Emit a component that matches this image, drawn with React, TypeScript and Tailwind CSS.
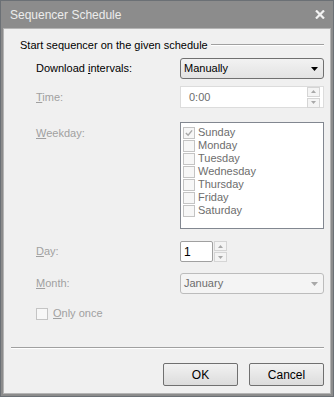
import React from "react";

const days = ["Sunday", "Monday", "Tuesday", "Wednesday", "Thursday", "Friday", "Saturday"];

// Small gray spin buttons used by Time and Day fields
function Spin() {
  return (
    <div className="flex flex-col gap-[1px]">
      <div className="w-[13px] h-[10px] border border-[#d5d5d5] bg-[#f4f4f4] flex items-center justify-center">
        <svg width="5" height="3" viewBox="0 0 5 3">
          <path d="M0 3 L2.5 0 L5 3 Z" fill="#a8a8a8" />
        </svg>
      </div>
      <div className="w-[13px] h-[10px] border border-[#d5d5d5] bg-[#f4f4f4] flex items-center justify-center">
        <svg width="5" height="3" viewBox="0 0 5 3">
          <path d="M0 0 L2.5 3 L5 0 Z" fill="#a8a8a8" />
        </svg>
      </div>
    </div>
  );
}

function CheckBox({ checked }: { checked?: boolean }) {
  return (
    <div className="w-[12px] h-[12px] border border-[#c4c4c4] bg-[#f7f7f7] flex items-center justify-center shrink-0">
      {checked && (
        <svg width="8" height="8" viewBox="0 0 9 9">
          <path d="M1 4.5 L3.5 7 L8 1.5" stroke="#a8a8a8" strokeWidth="1.6" fill="none" />
        </svg>
      )}
    </div>
  );
}

export default function App() {
  return (
    <div
      className="w-[334px] h-[397px] bg-[#8c8c8c] border border-[#6b7075] flex flex-col text-[11px] text-black"
      style={{ fontFamily: '"Liberation Sans", Arial, sans-serif' }}
    >
      {/* Title bar */}
      <div className="h-[27px] flex items-center justify-between pl-[9px] pr-[6px]">
        <span className="text-[12px] text-[#ececec] pt-[1px]">Sequencer Schedule</span>
        <svg width="10" height="9" viewBox="0 0 10 9" className="mr-[2px]">
          <path d="M1 0.5 L9 8.5 M9 0.5 L1 8.5" stroke="#f2f2f2" strokeWidth="2.2" />
        </svg>
      </div>

      {/* Client area */}
      <div className="flex-1 mx-[2px] mb-[2px] border border-[#b4b4b4] bg-[#f0f0f0] flex flex-col pl-[5px] pr-[6px]">
        {/* Group header */}
        <div className="flex items-center mt-[9px] h-[14px] pl-[11px]">
          <span className="whitespace-nowrap">Start sequencer on the given schedule</span>
          <div className="flex-1 ml-[3px] border-t border-[#a0a0a0] border-b-white border-b" />
        </div>

        <div className="pl-[27px] flex flex-col">
          {/* Download intervals */}
          <div className="flex items-center mt-[6px] h-[21px]">
            <span className="w-[144px]">
              Download <u>i</u>ntervals:
            </span>
            <div className="flex-1 h-[21px] border border-[#707070] rounded-[3px] bg-gradient-to-b from-[#f2f2f2] to-[#e3e3e3] flex items-center justify-between pl-[3px] pr-[5px]">
              <span>Manually</span>
              <svg width="7" height="4" viewBox="0 0 7 4">
                <path d="M0 0 L7 0 L3.5 4 Z" fill="#000" />
              </svg>
            </div>
          </div>

          {/* Time */}
          <div className="flex items-center mt-[7px] h-[22px]">
            <span className="w-[144px] text-[#a0a0a0]">
              <u>T</u>ime:
            </span>
            <div className="flex-1 h-[22px] border border-[#dcdcdc] bg-white flex items-center justify-between pl-[8px] pr-[3px]">
              <span className="text-[#6d6d6d]">0:00</span>
              <Spin />
            </div>
          </div>

          {/* Weekday */}
          <div className="flex items-start mt-[14px]">
            <span className="w-[144px] text-[#a0a0a0] mt-[3px]">
              <u>W</u>eekday:
            </span>
            <div className="flex-1 h-[107px] border border-[#828790] bg-white pt-[3px] pl-[2px] flex flex-col">
              {days.map((d, i) => (
                <div key={d} className="flex items-center h-[13px] gap-[3px]">
                  <CheckBox checked={i === 0} />
                  <span className="text-[#6d6d6d]">{d}</span>
                </div>
              ))}
            </div>
          </div>

          {/* Day */}
          <div className="flex items-center mt-[12px] h-[21px]">
            <span className="w-[144px] text-[#a0a0a0]">
              <u>D</u>ay:
            </span>
            <div className="w-[33px] h-[21px] border border-[#a0a0a0] rounded-[2px] bg-white flex items-center pl-[3px]">
              <span className="text-[12px]">1</span>
            </div>
            <div className="ml-[1px]">
              <Spin />
            </div>
          </div>

          {/* Month */}
          <div className="flex items-center mt-[11px] h-[21px]">
            <span className="w-[144px] text-[#a0a0a0]">
              <u>M</u>onth:
            </span>
            <div className="flex-1 h-[21px] border border-[#bcbcbc] rounded-[3px] bg-[#f4f4f4] flex items-center justify-between pl-[3px] pr-[5px]">
              <span className="text-[#6d6d6d]">January</span>
              <svg width="7" height="4" viewBox="0 0 7 4">
                <path d="M0 0 L7 0 L3.5 4 Z" fill="#a8a8a8" />
              </svg>
            </div>
          </div>

          {/* Only once */}
          <div className="flex items-center mt-[13px] h-[13px] gap-[5px]">
            <CheckBox />
            <span className="text-[#a0a0a0]">
              <u>O</u>nly once
            </span>
          </div>
        </div>

        {/* Separator */}
        <div className="mt-[27px] ml-[2px] border-t border-[#a0a0a0] border-b border-b-white" />

        {/* Buttons */}
        <div className="flex justify-end gap-[11px] mt-[14px]">
          <button className="w-[75px] h-[23px] border border-[#707070] rounded-[2px] bg-gradient-to-b from-[#f2f2f2] to-[#dcdcdc] text-[12px]">
            OK
          </button>
          <button className="w-[75px] h-[23px] border border-[#707070] rounded-[2px] bg-gradient-to-b from-[#f2f2f2] to-[#dcdcdc] text-[12px]">
            Cancel
          </button>
        </div>
      </div>
    </div>
  );
}
